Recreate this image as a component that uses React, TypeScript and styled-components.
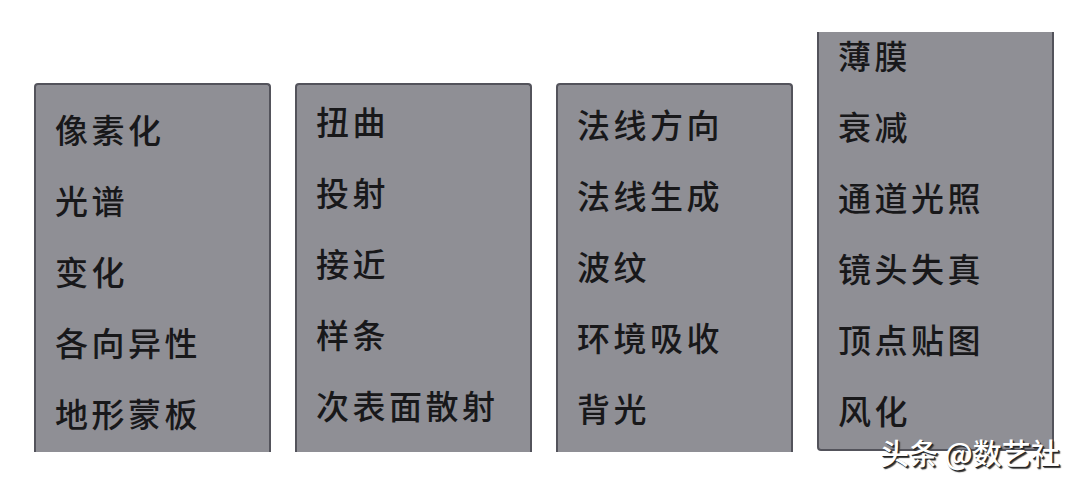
import React from 'react';
import styled, { createGlobalStyle } from 'styled-components';

const GlobalStyle = createGlobalStyle`
  html, body {
    margin: 0;
    padding: 0;
    background: #ffffff;
  }
  body {
    font-family: "Noto Sans CJK SC", "Noto Sans", sans-serif;
  }
`;

const Stage = styled.div`
  position: relative;
  width: 1080px;
  height: 485px;
  overflow: hidden;
  background: #ffffff;
`;

const MenuRow = styled.div`
  display: flex;
  align-items: flex-start;
  gap: 24px;
  padding-left: 34px;
`;

type Cut = 'top' | 'bottom';

const Menu = styled.div<{ $top: number; $height: number; $cut: Cut }>`
  box-sizing: border-box;
  width: 237px;
  height: ${(p) => p.$height}px;
  margin-top: ${(p) => p.$top}px;
  background: #8f8f95;
  border: 2px solid #53535b;
  border-${(p) => p.$cut}: none;
  border-radius: ${(p) => (p.$cut === 'bottom' ? '4px 4px 0 0' : '0 0 4px 4px')};
  overflow: hidden;
`;

const ItemList = styled.ul<{ $shift: number }>`
  list-style: none;
  margin: ${(p) => p.$shift}px 0 0 0;
  padding: 0 0 0 19px;
`;

const Item = styled.li`
  font-size: 33px;
  font-weight: 500;
  letter-spacing: 3.5px;
  line-height: 71px;
  height: 71px;
  color: #18181a;
  white-space: nowrap;
`;

const Watermark = styled.div`
  position: absolute;
  left: 880px;
  top: 433px;
  font-size: 29px;
  font-weight: 500;
  line-height: 38px;
  color: #ffffff;
  white-space: nowrap;
  text-shadow: 1px 1px 0 #222, 2px 2px 1px #3a3a3a;
`;

interface MenuData {
  items: string[];
  top: number;
  height: number;
  cut: Cut;
  shift: number;
}

const menus: MenuData[] = [
  { items: ['像素化', '光谱', '变化', '各向异性', '地形蒙板'], top: 83, height: 369, cut: 'bottom', shift: 9 },
  { items: ['扭曲', '投射', '接近', '样条', '次表面散射'], top: 83, height: 369, cut: 'bottom', shift: 1 },
  { items: ['法线方向', '法线生成', '波纹', '环境吸收', '背光'], top: 83, height: 369, cut: 'bottom', shift: 4 },
  { items: ['薄膜', '衰减', '通道光照', '镜头失真', '顶点贴图', '风化'], top: 32, height: 419, cut: 'top', shift: -12 },
];

const App: React.FC = () => {
  return (
    <>
      <GlobalStyle />
      <Stage>
        <MenuRow>
          {menus.map((menu, i) => (
            <Menu key={i} $top={menu.top} $height={menu.height} $cut={menu.cut}>
              <ItemList $shift={menu.shift}>
                {menu.items.map((label) => (
                  <Item key={label}>{label}</Item>
                ))}
              </ItemList>
            </Menu>
          ))}
        </MenuRow>
        <Watermark>头条 @数艺社</Watermark>
      </Stage>
    </>
  );
};

export default App;
